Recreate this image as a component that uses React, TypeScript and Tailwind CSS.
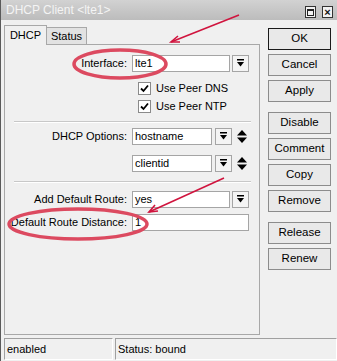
import React from 'react';

const font = { fontFamily: '"Liberation Sans", Arial, sans-serif' };

function DropIcon() {
  return (
    <svg width="9" height="9" viewBox="0 0 9 9">
      <rect x="1" y="0" width="7" height="1.5" fill="#000" />
      <path d="M1 3 L8 3 L4.5 7.5 Z" fill="#000" />
    </svg>
  );
}

function UpDownIcon() {
  return (
    <svg width="10" height="13" viewBox="0 0 10 13">
      <path d="M5 0 L10 5.5 L0 5.5 Z" fill="#000" />
      <path d="M0 7.5 L10 7.5 L5 13 Z" fill="#000" />
    </svg>
  );
}

function DropButton() {
  return (
    <div className="flex h-[17px] w-[17px] items-center justify-center border border-[#a5a5a5] bg-[#f4f4f4]">
      <DropIcon />
    </div>
  );
}

function Check({ label }: { label: string }) {
  return (
    <div className="flex h-[17px] items-center pl-[133px]">
      <div className="flex h-[13px] w-[13px] items-center justify-center border border-[#8a8a8a] bg-white">
        <svg width="9" height="9" viewBox="0 0 9 9">
          <path d="M1 4.5 L3.5 7 L8 1.5" stroke="#000" strokeWidth="1.8" fill="none" />
        </svg>
      </div>
      <span className="ml-[5px] text-[11px] text-black">{label}</span>
    </div>
  );
}

function Field({ label, value, width, drop, updown, className = '' }: { label: string; value: string; width: string; drop?: boolean; updown?: boolean; className?: string }) {
  return (
    <div className={`flex h-[17px] items-center ${className}`}>
      <div className="w-[122px] text-right text-[11px] text-black">{label}</div>
      <div className={`ml-[5px] flex h-[17px] items-center border border-[#a5a5a5] bg-white pl-[2px] text-[11px] text-black ${width}`}>
        {value}
      </div>
      {drop && (
        <div className={updown ? 'ml-[3px]' : 'ml-[2px]'}>
          <DropButton />
        </div>
      )}
      {updown && (
        <div className="ml-[5px] flex items-center">
          <UpDownIcon />
        </div>
      )}
    </div>
  );
}

function Btn({ label, primary }: { label: string; primary?: boolean }) {
  return (
    <div
      className={`flex h-[22px] w-[63px] items-center justify-center bg-[#e9e9e9] text-[11.5px] text-black ${
        primary ? 'border border-[#1a1a1a]' : 'border border-[#8c8c8c]'
      }`}
    >
      {label}
    </div>
  );
}

function Separator() {
  return <div className="ml-[9px] mr-[8px] h-[2px] border-t border-[#c8c8c8] border-b-white" style={{ borderBottomWidth: 1 }} />;
}

export default function App() {
  return (
    <div className="relative h-[361px] w-[337px] overflow-hidden border-l border-[#5a5a5a] bg-[#f0f0f0]" style={font}>
      {/* title bar */}
      <div className="flex h-[20px] items-center justify-between bg-gradient-to-b from-[#d2d2d2] to-[#bcbcbc] pl-[5px] pr-[4px]">
        <span className="text-[12px] text-[#f4f4f4]">DHCP Client &lt;lte1&gt;</span>
        <div className="mt-[4px] flex gap-[6px]">
          <div className="flex h-[12px] w-[11px] items-center justify-center border border-[#333] bg-[#f2f2f2]">
            <div className="h-[7px] w-[7px] border border-[#222] border-t-2" />
          </div>
          <div className="flex h-[12px] w-[11px] items-center justify-center border border-[#333] bg-[#f2f2f2] text-[11px] font-bold leading-none text-[#111]">
            ×
          </div>
        </div>
      </div>

      <div className="flex h-[318px]">
        {/* left: tabs and panel */}
        <div className="ml-[3px] flex w-[256px] flex-col pt-[5px]">
          <div className="flex items-end">
            <div className="relative z-10 -mb-px flex h-[20px] w-[43px] items-center justify-center border border-b-0 border-[#a8a8a8] bg-[#f0f0f0] text-[11px] text-black">
              DHCP
            </div>
            <div className="flex h-[17px] w-[40px] items-center justify-center border border-b-0 border-l-0 border-[#a8a8a8] bg-[#e2e2e2] text-[11px] text-black">
              Status
            </div>
          </div>
          <div className="flex h-[291px] flex-col border border-[#a8a8a8] bg-[#f0f0f0]">
            <Field label="Interface:" value="lte1" width="w-[98px]" drop className="mt-[10px]" />
            <div className="mt-[8px]">
              <Check label="Use Peer DNS" />
            </div>
            <div className="mt-[1px]">
              <Check label="Use Peer NTP" />
            </div>
            <div className="mt-[6px]">
              <Separator />
            </div>
            <Field label="DHCP Options:" value="hostname" width="w-[80px]" drop updown className="mt-[5px]" />
            <Field label="" value="clientid" width="w-[80px]" drop updown className="mt-[10px]" />
            <div className="mt-[9px]">
              <Separator />
            </div>
            <Field label="Add Default Route:" value="yes" width="w-[98px]" drop className="mt-[8px]" />
            <Field label="Default Route Distance:" value="1" width="w-[117px]" className="mt-[6px]" />
          </div>
        </div>

        {/* right: buttons */}
        <div className="ml-[8px] flex flex-col pt-[8px]">
          <div className="flex flex-col gap-[4px]">
            <Btn label="OK" primary />
            <Btn label="Cancel" />
            <Btn label="Apply" />
          </div>
          <div className="mt-[10px] flex flex-col gap-[4px]">
            <Btn label="Disable" />
            <Btn label="Comment" />
            <Btn label="Copy" />
            <Btn label="Remove" />
          </div>
          <div className="mt-[10px] flex flex-col gap-[4px]">
            <Btn label="Release" />
            <Btn label="Renew" />
          </div>
        </div>
      </div>

      {/* status bar */}
      <div className="ml-[3px] flex h-[22px] gap-[2px]">
        <div className="flex w-[109px] items-center border border-[#a0a0a0] border-b-white border-r-white pl-[2px] text-[11px] text-black">
          enabled
        </div>
        <div className="flex flex-1 items-center border border-[#a0a0a0] border-b-white border-r-white pl-[2px] text-[11px] text-black">
          Status: bound
        </div>
      </div>

      {/* red annotations */}
      <svg className="pointer-events-none absolute left-0 top-0" width="337" height="361" viewBox="0 0 337 361">
        <ellipse cx="119" cy="64" rx="46" ry="14" fill="none" stroke="#dc4a60" strokeWidth="3.5" />
        <ellipse cx="77" cy="224" rx="69" ry="15" fill="none" stroke="#dc4a60" strokeWidth="3.5" />
        <g stroke="#d0143e" strokeWidth="1.6" fill="none">
          <line x1="238" y1="15" x2="170" y2="42" />
          <path d="M177 36 L170 42 L179 42" />
          <line x1="223" y1="178" x2="148" y2="212" />
          <path d="M154 205 L148 212 L157 211" />
        </g>
      </svg>
    </div>
  );
}
